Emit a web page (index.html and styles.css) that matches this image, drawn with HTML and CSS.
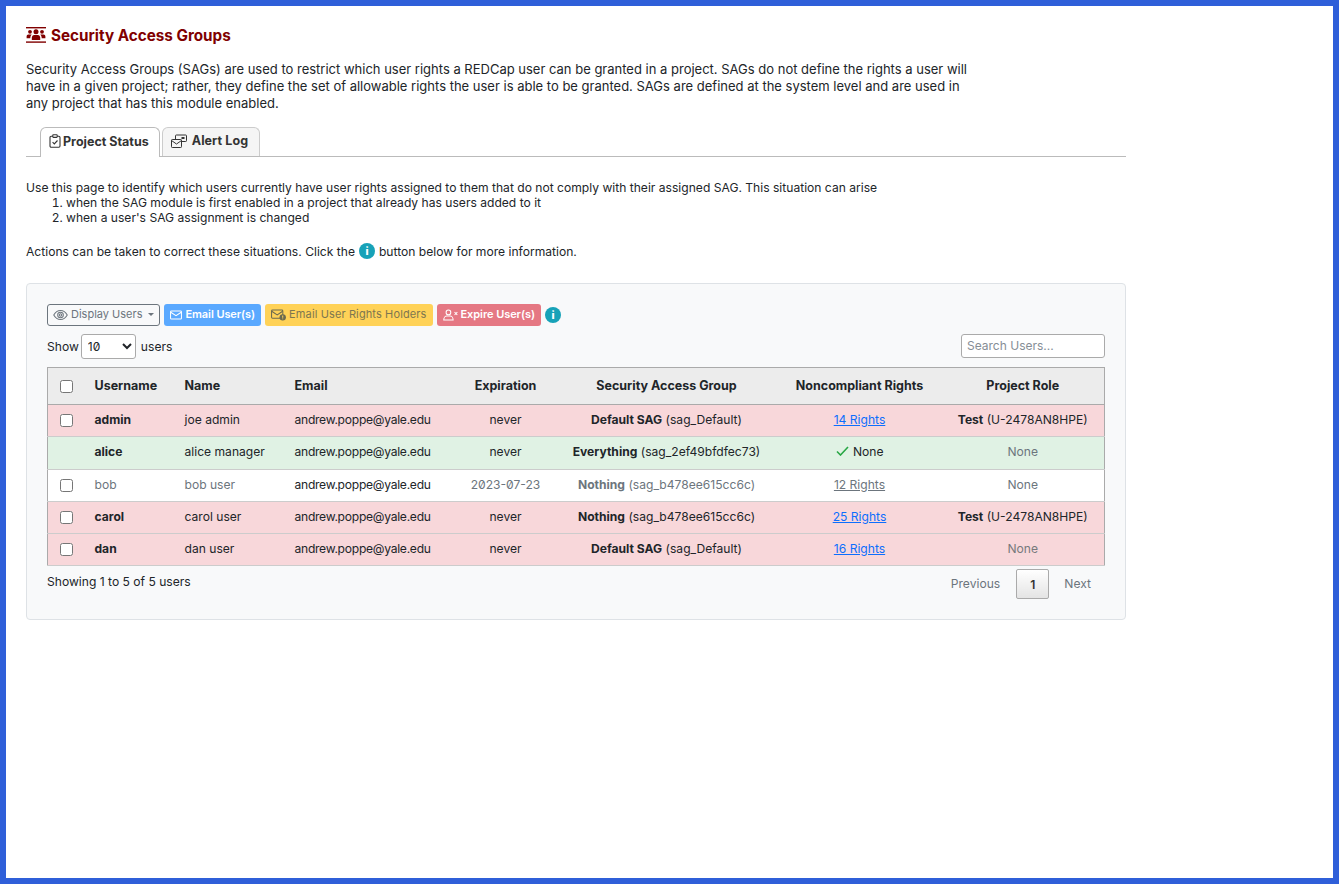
FILE: index.html
```html
<!DOCTYPE html>
<html lang="en">
<head>
    <meta charset="UTF-8">
    <title>Security Access Groups</title>
    <link rel="stylesheet" href="styles.css">
</head>
<body>
<div class="page">
    <h1 class="title">
        <svg class="title-icon" viewBox="0 0 20 16" width="20" height="16" aria-hidden="true">
            <rect x="0" y="0" width="20" height="1.400" fill="#800000"/>
            <rect x="0" y="14.400" width="20" height="1.400" fill="#800000"/>
            <circle cx="10" cy="4.800" r="2.500" fill="#800000"/>
            <circle cx="4" cy="4.800" r="1.900" fill="#800000"/>
            <circle cx="16" cy="4.800" r="1.900" fill="#800000"/>
            <path d="M5.800 13v-2.200c0-1.800 1.100-2.900 2.400-2.900h3.600c1.300 0 2.400 1.100 2.400 2.900V13z" fill="#800000"/>
            <path d="M.6 11.200V9.400c0-1.100.8-2 1.800-2h2.400c.3 0 .6.100.9.300-.8.700-1.400 1.800-1.400 3.100v.4z" fill="#800000"/>
            <path d="M19.400 11.200V9.400c0-1.100-.8-2-1.800-2h-2.400c-.3 0-.6.100-.9.300.8.700 1.400 1.800 1.400 3.100v.4z" fill="#800000"/>
        </svg>
        Security Access Groups
    </h1>
    <p class="intro">Security Access Groups (SAGs) are used to restrict which user rights a REDCap user can be granted in a project. SAGs do not define the rights a user will have in a given project; rather, they define the set of allowable rights the user is able to be granted. SAGs are defined at the system level and are used in any project that has this module enabled.</p>

    <div class="tabs">
        <a class="tab active" href="#">
            <svg viewBox="0 0 12 14" width="12" height="14" fill="none" stroke="#333" stroke-width="1.100" aria-hidden="true">
                <rect x="1" y="2.200" width="10" height="11" rx="1.200"/>
                <rect x="3.800" y="0.800" width="4.400" height="2.600" rx=".6" fill="#fff"/>
                <path d="M3.600 8.200l1.700 1.700 3.200-3.400"/>
            </svg>
            Project Status
        </a>
        <a class="tab" href="#">
            <svg viewBox="0 0 16 14" width="16" height="14" fill="none" stroke="#333" stroke-width="1" aria-hidden="true">
                <rect x="4.500" y="1" width="11" height="6.500" rx=".8"/>
                <rect x="10.500" y="3" width="3" height="2" fill="#333" stroke="none"/>
                <rect x=".5" y="5.500" width="10" height="8" rx=".8" fill="#f5f5f5"/>
                <path d="M.5 6.500l5 3.500 5-3.500"/>
            </svg>
            Alert Log
        </a>
    </div>

    <div class="help">
        <div>Use this page to identify which users currently have user rights assigned to them that do not comply with their assigned SAG. This situation can arise</div>
        <ol>
            <li>when the SAG module is first enabled in a project that already has users added to it</li>
            <li>when a user's SAG assignment is changed</li>
        </ol>
        <p class="actions">Actions can be taken to correct these situations. Click the <span class="info-btn">i</span> button below for more information.</p>
    </div>

    <div class="card">
        <div class="toolbar">
            <button class="btn btn-outline">
                <svg viewBox="0 0 16 12" width="15" height="12" fill="none" stroke="#6c757d" stroke-width="1.100" aria-hidden="true">
                    <path d="M.8 6C2.500 2.900 5 1.200 8 1.200S13.500 2.900 15.200 6C13.500 9.100 11 10.800 8 10.800S2.500 9.100.8 6z"/>
                    <circle cx="8" cy="6" r="3"/>
                    <circle cx="8" cy="6" r="1.300"/>
                </svg>
                Display Users <span class="caret"></span>
            </button>
            <button class="btn btn-blue">
                <svg viewBox="0 0 13 10" width="12" height="10" fill="none" stroke="#fff" stroke-width="1.100" aria-hidden="true">
                    <rect x=".6" y=".6" width="11.800" height="8.800" rx="1"/>
                    <path d="M.8 2l5.700 3.800L12.200 2"/>
                </svg>
                Email User(s)
            </button>
            <button class="btn btn-yellow">
                <svg viewBox="0 0 16 12" width="15" height="12" fill="none" stroke="#6c6a50" stroke-width="1.100" aria-hidden="true">
                    <rect x=".6" y=".6" width="12" height="8.800" rx="1"/>
                    <path d="M.8 2l5.800 3.800L12.400 2"/>
                    <circle cx="12.500" cy="8.500" r="3.400" fill="#6c6a50" stroke="none"/>
                    <path d="M12.500 6.600v2.300M12.500 9.700v.8" stroke="#ffd257"/>
                </svg>
                Email User Rights Holders
            </button>
            <button class="btn btn-red">
                <svg viewBox="0 0 16 12" width="15" height="12" fill="none" stroke="#fff" stroke-width="1.100" aria-hidden="true">
                    <circle cx="5.800" cy="3.200" r="2.500"/>
                    <path d="M.8 11.300c0-2.700 1.800-4.200 3.200-4.200h3.600c1.400 0 3.200 1.500 3.200 4.200z"/>
                    <path d="M12.300 3l3 3M15.300 3l-3 3"/>
                </svg>
                Expire User(s)
            </button>
            <span class="info-btn">i</span>
        </div>

        <div class="table-top">
            <label class="length">Show
                <select class="length-select">
                    <option>10</option>
                </select>
                users</label>
            <input class="search" type="text" placeholder="Search Users...">
        </div>

        <table class="users">
            <colgroup>
                <col class="c-check"><col class="c-user"><col class="c-name"><col class="c-email">
                <col class="c-exp"><col class="c-sag"><col class="c-rights"><col class="c-role">
            </colgroup>
            <thead>
                <tr>
                    <th class="center"><input type="checkbox" class="check"></th>
                    <th>Username</th>
                    <th>Name</th>
                    <th>Email</th>
                    <th class="center">Expiration</th>
                    <th class="center">Security Access Group</th>
                    <th class="center">Noncompliant Rights</th>
                    <th class="center">Project Role</th>
                </tr>
            </thead>
            <tbody>
                <tr class="bad">
                    <td class="center"><input type="checkbox" class="check"></td>
                    <td><b>admin</b></td>
                    <td>joe admin</td>
                    <td class="mail">andrew.poppe@yale.edu</td>
                    <td class="center">never</td>
                    <td class="center"><b>Default SAG</b> (sag_Default)</td>
                    <td class="center"><a href="#">14 Rights</a></td>
                    <td class="center"><b>Test</b> (U-2478AN8HPE)</td>
                </tr>
                <tr class="good">
                    <td></td>
                    <td><b>alice</b></td>
                    <td>alice manager</td>
                    <td class="mail">andrew.poppe@yale.edu</td>
                    <td class="center">never</td>
                    <td class="center"><b>Everything</b> (sag_2ef49bfdfec73)</td>
                    <td class="center">
                        <svg class="tick" viewBox="0 0 13 10" width="13" height="10" fill="none" stroke="#28a745" stroke-width="1.600" aria-hidden="true"><path d="M1 5.500l3.500 3.500L12 1"/></svg>
                        None
                    </td>
                    <td class="center muted">None</td>
                </tr>
                <tr class="expired">
                    <td class="center"><input type="checkbox" class="check"></td>
                    <td class="muted">bob</td>
                    <td class="muted">bob user</td>
                    <td class="mail">andrew.poppe@yale.edu</td>
                    <td class="center muted">2023-07-23</td>
                    <td class="center muted"><b>Nothing</b> (sag_b478ee615cc6c)</td>
                    <td class="center"><a href="#">12 Rights</a></td>
                    <td class="center muted">None</td>
                </tr>
                <tr class="bad">
                    <td class="center"><input type="checkbox" class="check"></td>
                    <td><b>carol</b></td>
                    <td>carol user</td>
                    <td class="mail">andrew.poppe@yale.edu</td>
                    <td class="center">never</td>
                    <td class="center"><b>Nothing</b> (sag_b478ee615cc6c)</td>
                    <td class="center"><a href="#">25 Rights</a></td>
                    <td class="center"><b>Test</b> (U-2478AN8HPE)</td>
                </tr>
                <tr class="bad">
                    <td class="center"><input type="checkbox" class="check"></td>
                    <td><b>dan</b></td>
                    <td>dan user</td>
                    <td class="mail">andrew.poppe@yale.edu</td>
                    <td class="center">never</td>
                    <td class="center"><b>Default SAG</b> (sag_Default)</td>
                    <td class="center"><a href="#">16 Rights</a></td>
                    <td class="center muted">None</td>
                </tr>
            </tbody>
        </table>

        <div class="table-bottom">
            <div class="count">Showing 1 to 5 of 5 users</div>
            <div class="pager">
                <span class="page-link">Previous</span>
                <span class="page-link current">1</span>
                <span class="page-link">Next</span>
            </div>
        </div>
    </div>
</div>
</body>
</html>
```

FILE: styles.css
```css
* {
    box-sizing: border-box;
}
html, body {
    height: 100%;
}
body {
    margin: 0;
    font-family: Inter, "Noto Sans", sans-serif;
    font-size: 12.100px;
    font-feature-settings: "zero" 1;
    color: #212529;
    background: #fff;
}
.page {
    height: 884px;
    border: 6px solid #2f5fd9;
    padding: 20px 20px 0;
    overflow: hidden;
}
.title {
    display: flex;
    align-items: center;
    gap: 5px;
    margin: 0;
    height: 18px;
    font-size: 15.250px;
    font-weight: 700;
    color: #800000;
}
.intro {
    width: 950px;
    margin: 17px 0 0;
    font-size: 13px;
    line-height: 17px;
}
.tabs {
    display: flex;
    gap: 2px;
    width: 1100px;
    margin-top: 15px;
    padding-left: 14px;
    height: 30px;
    border-bottom: 1px solid #bbb;
}
.tab {
    display: flex;
    align-items: center;
    gap: 5px;
    height: 29px;
    padding: 0 11px 3px 8px;
    border: 1px solid #ccc;
    border-bottom: 0;
    border-radius: 6px 6px 0 0;
    background: #f5f5f5;
    color: #333;
    font-size: 12.500px;
    font-weight: 700;
    letter-spacing: .08px;
    text-decoration: none;
}
.tab.active {
    height: 30px;
    gap: 2px;
    background: #fff;
    border-color: #bbb;
    padding-right: 10px;
    letter-spacing: 0;
}
.help {
    margin-top: 23px;
    line-height: 15px;
}
.help ol {
    margin: 0;
    padding-left: 40px;
}
.actions {
    display: flex;
    align-items: center;
    gap: 4px;
    margin: 17px 0 0;
    height: 18px;
}
.info-btn {
    display: inline-flex;
    align-items: center;
    justify-content: center;
    width: 16px;
    height: 16px;
    border-radius: 50%;
    background: #17a2b8;
    color: #fff;
    font-size: 11px;
    font-weight: 800;
}
.card {
    width: 1100px;
    height: 337px;
    margin-top: 23px;
    padding: 20px;
    background: #f8f9fa;
    border: 1px solid #dee2e6;
    border-radius: 4px;
}
.toolbar {
    display: flex;
    align-items: center;
    gap: 4px;
    height: 22px;
}
.btn {
    display: flex;
    align-items: center;
    gap: 3px;
    height: 22px;
    padding: 0 5px 1px;
    border: 1px solid transparent;
    border-radius: 3px;
    font-family: inherit;
    font-size: 11px;
    font-feature-settings: inherit;
    line-height: 1;
}
.btn-outline {
    background: #fff0;
    border-color: #6c757d;
    color: #6c757d;
}
.btn-blue {
    background: #5aa9ff;
    color: #fff;
    font-weight: 600;
    letter-spacing: -.08px;
}
.btn-yellow {
    background: #ffd257;
    color: #7d7650;
    letter-spacing: .12px;
}
.btn-red {
    background: #e57883;
    color: #fff;
    font-weight: 600;
    letter-spacing: -.06px;
}
.caret {
    width: 0;
    height: 0;
    margin-left: 3px;
    border-left: 3px solid transparent;
    border-right: 3px solid transparent;
    border-top: 3px solid #6c757d;
}
.table-top {
    display: flex;
    justify-content: space-between;
    align-items: center;
    margin-top: 8px;
    height: 24px;
}
.length {
    display: flex;
    align-items: center;
    gap: 3px;
}
.length-select {
    width: 55px;
    height: 25px;
    margin: 0 2px 0 -1px;
    padding-left: 2px;
    background: #fff;
    border: 1px solid #aaa;
    border-radius: 3px;
    font-family: inherit;
    font-size: 12px;
    font-feature-settings: inherit;
    color: #212529;
}
.search {
    width: 144px;
    height: 24px;
    padding: 0 5px 1px;
    background: #fff;
    border: 1px solid #aaa;
    border-radius: 3px;
    font-family: inherit;
    font-size: 12px;
}
.search::placeholder {
    color: #868e96;
}
.users {
    width: 1058px;
    margin-top: 9px;
    table-layout: fixed;
    border-collapse: collapse;
    border: 1px solid #aaa;
}
.c-check { width: 36px; }
.c-user { width: 90px; }
.c-name { width: 110px; }
.c-email { width: 172px; }
.c-exp { width: 100px; }
.c-sag { width: 222px; }
.c-rights { width: 164px; }
.c-role { width: 163px; }
.users th {
    height: 37px;
    padding: 0 11px 1px;
    background: #ececec;
    border-bottom: 1px solid #aaa;
    text-align: left;
    font-size: 12.500px;
    font-weight: 700;
    white-space: nowrap;
}
.users td {
    height: 32px;
    padding: 0 11px 2px;
    border-bottom: 1px solid #ccc;
    white-space: nowrap;
}
.users .good td {
    height: 33px;
    padding-bottom: 3px;
}
.users .center {
    text-align: center;
    padding-left: 0;
    padding-right: 0;
}
.users th:first-child, .users td:first-child {
    padding-left: 1px;
}
.mail {
    letter-spacing: -.27px;
}
.bad td {
    background: #f8d7da;
}
.good td {
    background: #e0f2e4;
}
.expired td {
    background: #fff;
}
.users .muted {
    color: #6c757d;
}
.users .bad .muted {
    color: #77797c;
}
.users a {
    color: #0d6efd;
}
.users .expired a {
    color: #6c757d;
}
.check {
    width: 13px;
    height: 13px;
    margin: 0;
    vertical-align: middle;
}
.tick {
    margin-right: 1px;
}
.table-bottom {
    display: flex;
    justify-content: space-between;
    margin-top: 3px;
}
.count {
    padding-top: 5px;
}
.pager {
    display: flex;
    align-items: center;
    height: 30px;
}
.page-link {
    padding: 0 14px 1px;
    color: #6c757d;
}
.page-link.current {
    display: flex;
    align-items: center;
    height: 30px;
    padding: 0 13px;
    margin: 0 1px 0 2px;
    background: linear-gradient(#fff, #e4e4e4);
    border: 1px solid #aaa;
    border-radius: 2px;
    color: #333;
    font-weight: 600;
}
```
